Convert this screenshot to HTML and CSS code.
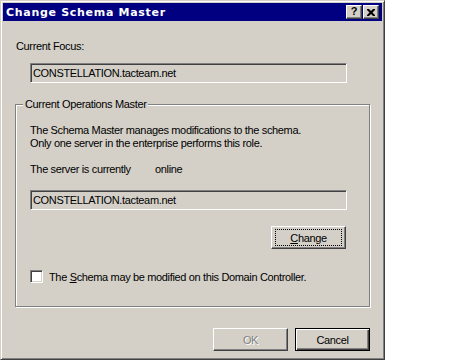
FILE: index.html
```html
<!DOCTYPE html>
<html lang="en">
<head>
    <meta charset="UTF-8">
    <title>Change Schema Master</title>
    <link rel="stylesheet" href="styles.css">
</head>
<body>
    <div class="dialog">
        <div class="titlebar">
            <span class="title">Change Schema Master</span>
            <div class="caption-btns">
                <span class="cap-btn help">?</span>
                <span class="cap-btn close">
                    <svg width="8" height="7" viewBox="0 0 8 7">
                        <path d="M0 0h2l2 2 2-2h2v1L5.5 3.5 8 6v1H6L4 5 2 7H0V6l2.5-2.5L0 1z" fill="#000"/>
                    </svg>
                </span>
            </div>
        </div>

        <div class="content">
            <div class="focus-label">Current Focus:</div>
            <div class="field">CONSTELLATION.tacteam.net</div>

            <div class="group">
                <span class="group-title">Current Operations Master</span>
                <p class="desc">The Schema Master manages modifications to the schema.<br>Only one server in the enterprise performs this role.</p>
                <div class="status"><span class="status-label">The server is currently</span><span>online</span></div>
                <div class="field">CONSTELLATION.tacteam.net</div>
                <div class="change-row">
                    <button class="btn"><span class="focus-ring"><u>C</u>hange</span></button>
                </div>
                <label class="check-row">
                    <span class="checkbox"></span>
                    <span>The <u>S</u>chema may be modified on this Domain Controller.</span>
                </label>
            </div>

            <div class="footer">
                <button class="btn" disabled>OK</button>
                <button class="btn default">Cancel</button>
            </div>
        </div>
    </div>
</body>
</html>
```

FILE: styles.css
```css
:root {
    --face: #d4d0c8;
    --shadow: #808080;
    --dark: #404040;
    --title: #000080;
}

body {
    margin: 0;
    background: #fff;
    font-family: "Liberation Sans", Arial, sans-serif;
    font-size: 11px;
    letter-spacing: -0.35px;
    color: #000;
}

.dialog {
    width: 385px;
    height: 360px;
    box-sizing: border-box;
    background: var(--face);
    border: 1px solid;
    border-color: var(--face) var(--dark) var(--dark) var(--face);
    box-shadow: inset 1px 1px #fff, inset -1px -1px var(--shadow);
    padding: 2px;
}

.titlebar {
    height: 18px;
    background: var(--title);
    display: flex;
    align-items: center;
    justify-content: space-between;
    padding-left: 3px;
}

.title {
    color: #fff;
    font-family: "DejaVu Sans", sans-serif;
    font-weight: bold;
    font-size: 11px;
    letter-spacing: 0.7px;
}

.caption-btns {
    display: flex;
    gap: 1px;
    margin-right: 3px;
}

.cap-btn {
    width: 16px;
    height: 14px;
    box-sizing: border-box;
    background: var(--face);
    border: 1px solid;
    border-color: #fff var(--dark) var(--dark) #fff;
    box-shadow: inset -1px -1px var(--shadow);
    display: flex;
    align-items: center;
    justify-content: center;
}

.help {
    font-weight: bold;
    font-size: 11px;
    line-height: 1;
    padding-bottom: 1px;
}

.content {
    padding-left: 12px;
}

.focus-label {
    margin: 19px 0 0 1px;
    line-height: 13px;
}

.field {
    width: 317px;
    height: 20px;
    box-sizing: border-box;
    margin: 10px 0 0 15px;
    border: 1px solid;
    border-color: var(--shadow) #fff #fff var(--shadow);
    box-shadow: inset 1px 1px var(--dark), inset -1px -1px var(--face);
    padding-left: 2px;
    display: flex;
    align-items: center;
}

.group {
    position: relative;
    width: 355px;
    height: 203px;
    box-sizing: border-box;
    margin-top: 21px;
    border: 1px solid var(--shadow);
    box-shadow: inset 1px 1px #fff, 1px 1px #fff;
    padding: 19px 0 0 14px;
}

.group-title {
    position: absolute;
    top: -7px;
    left: 7px;
    padding: 0 2px;
    background: var(--face);
    line-height: 13px;
}

.group .field {
    margin: 14px 0 0 0;
}

.desc {
    margin: 0;
    line-height: 13px;
}

.status {
    margin-top: 13px;
    line-height: 13px;
}

.status-label {
    display: inline-block;
    width: 125px;
}

.change-row {
    margin: 16px 0 0 241px;
}

.btn {
    width: 75px;
    height: 23px;
    box-sizing: border-box;
    background: var(--face);
    font-family: inherit;
    font-size: 11px;
    letter-spacing: inherit;
    color: #000;
    border: 1px solid;
    border-color: #fff var(--dark) var(--dark) #fff;
    box-shadow: inset -1px -1px var(--shadow);
    padding: 0;
    display: inline-flex;
    align-items: center;
    justify-content: center;
}

.focus-ring {
    display: flex;
    align-items: center;
    justify-content: center;
    width: 65px;
    height: 15px;
    outline: 1px dotted #000;
}

.btn:disabled {
    color: var(--shadow);
    text-shadow: 1px 1px #fff;
}

.btn.default {
    border-color: #000;
    box-shadow: inset 1px 1px #fff, inset -1px -1px var(--dark), inset -2px -2px var(--shadow);
}

.check-row {
    display: flex;
    align-items: center;
    gap: 6px;
    margin-top: 21px;
    height: 13px;
}

.checkbox {
    width: 13px;
    height: 13px;
    box-sizing: border-box;
    background: #fff;
    border: 1px solid;
    border-color: var(--shadow) #fff #fff var(--shadow);
    box-shadow: inset 1px 1px var(--dark), inset -1px -1px var(--face);
}

.footer {
    display: flex;
    gap: 7px;
    margin: 21px 0 0 198px;
}
```
